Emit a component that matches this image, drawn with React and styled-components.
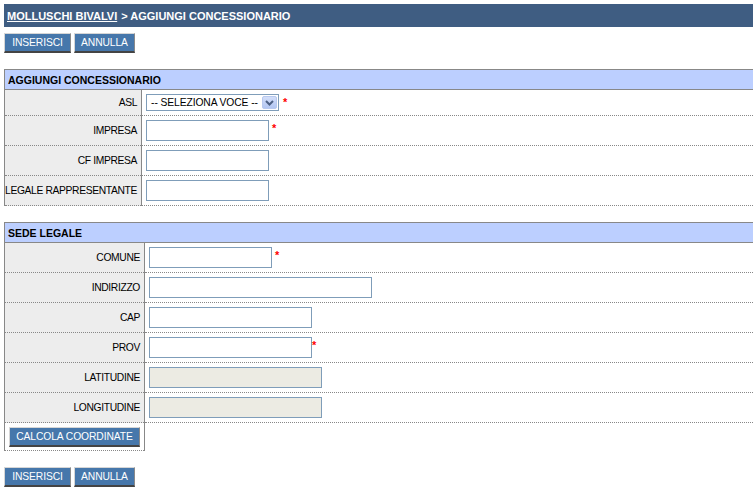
import React from 'react';
import styled, { createGlobalStyle } from 'styled-components';

const GlobalStyle = createGlobalStyle`
  html, body {
    margin: 0;
    padding: 0;
    background: #ffffff;
    overflow: hidden;
  }
  body {
    font-family: "Liberation Sans", Arial, sans-serif;
    font-size: 10px;
    color: #000000;
  }
`;

const Page = styled.div`
  padding: 4px 0 0 4px;
`;

const TitleBar = styled.div`
  display: flex;
  align-items: center;
  height: 23px;
  padding-left: 3px;
  background: #3f5d82;
  color: #ffffff;
  font-weight: bold;
  font-size: 11px;
`;

const Crumb = styled.a`
  color: #ffffff;
  text-decoration: underline;
  margin-right: 4px;
`;

const ButtonBar = styled.div`
  display: flex;
  gap: 3px;
  margin-top: ${(p) => p.$top || 6}px;
`;

const Button = styled.button`
  box-sizing: border-box;
  height: 20px;
  width: ${(p) => (p.$width ? `${p.$width}px` : 'auto')};
  padding: 0 5px;
  background: #4677ab;
  color: #ffffff;
  font-family: "Liberation Sans", Arial, sans-serif;
  font-size: 10.3px;
  letter-spacing: -0.1px;
  border-style: solid;
  border-width: 1px 1px 2px 1px;
  border-color: #d6d6d6 #8a8a8a #444444 #d6d6d6;
  cursor: pointer;
`;

const Table = styled.table`
  width: 100%;
  margin-top: ${(p) => p.$top}px;
  border-collapse: collapse;
  border-left: 1px solid #888888;
`;

const HeadCell = styled.th`
  height: 19px;
  padding: 0 0 0 3px;
  background: #bccfff;
  border-top: 1px solid #888888;
  border-bottom: 1px solid #888888;
  text-align: left;
  font-weight: bold;
  font-size: 10.5px;
`;

const Row = styled.tr`
  height: ${(p) => p.$height || 30}px;
`;

const Label = styled.td`
  box-sizing: border-box;
  width: ${(p) => p.$width}px;
  padding: 0 4px 0 0;
  background: ${(p) => (p.$plain ? '#ffffff' : '#ededed')};
  text-align: ${(p) => (p.$plain ? 'left' : 'right')};
  padding-left: ${(p) => (p.$plain ? '4px' : '0')};
  white-space: nowrap;
  font-size: 10.3px;
  letter-spacing: -0.35px;
  border-right: 1px solid #888888;
  border-bottom: 1px dotted #888888;
`;

const Value = styled.td`
  padding: 0 0 0 4px;
  border-bottom: ${(p) => (p.$bare ? 'none' : '1px dotted #888888')};
  white-space: nowrap;
`;

const Field = styled.div`
  display: inline-flex;
  align-items: flex-start;
  vertical-align: middle;
`;

const Input = styled.input`
  box-sizing: border-box;
  width: ${(p) => p.$width}px;
  height: 21px;
  margin: 0;
  padding: 0 3px;
  border: 1px solid #7f9db9;
  background: ${(p) => (p.disabled ? '#ecebe3' : '#ffffff')};
  font-family: "Liberation Sans", Arial, sans-serif;
  font-size: 10px;
`;

const Required = styled.span`
  margin-left: ${(p) => p.$gap ?? 3}px;
  margin-top: 3px;
  color: #ff0000;
  font-weight: bold;
  font-size: 11px;
  line-height: 10px;
`;

const Select = styled.div`
  box-sizing: border-box;
  display: flex;
  align-items: center;
  justify-content: space-between;
  width: 133px;
  height: 17px;
  padding: 0 1px 0 4px;
  border: 1px solid #7f9db9;
  background: #ffffff;
  font-size: 10.3px;
  letter-spacing: -0.1px;
`;

const Arrow = styled.span`
  display: flex;
  align-items: center;
  justify-content: center;
  width: 15px;
  height: 13px;
  border-radius: 2px;
  background: linear-gradient(#d3def9, #b2c6f2);
  border: 1px solid #b8c9ef;
  box-sizing: border-box;
`;

function Chevron() {
  return (
    <svg width="9" height="6" viewBox="0 0 9 6">
      <path d="M1 1 L4.5 4.5 L8 1" fill="none" stroke="#4d6185" strokeWidth="2" />
    </svg>
  );
}

const ownerRows = [
  { label: 'IMPRESA', width: 123, required: true },
  { label: 'CF IMPRESA', width: 123 },
  { label: 'LEGALE RAPPRESENTANTE', width: 123 },
];

const siteRows = [
  { label: 'COMUNE', width: 123, required: true, gap: 3 },
  { label: 'INDIRIZZO', width: 223 },
  { label: 'CAP', width: 163 },
  { label: 'PROV', width: 163, required: true, gap: 0 },
  { label: 'LATITUDINE', width: 173, disabled: true },
  { label: 'LONGITUDINE', width: 173, disabled: true },
];

function Actions({ top }) {
  return (
    <ButtonBar $top={top}>
      <Button type="submit" $width={67}>INSERISCI</Button>
      <Button type="button" $width={61}>ANNULLA</Button>
    </ButtonBar>
  );
}

export default function App() {
  return (
    <>
      <GlobalStyle />
      <Page>
        <TitleBar>
          <Crumb href="#molluschi">MOLLUSCHI BIVALVI</Crumb>
          {'> AGGIUNGI CONCESSIONARIO'}
        </TitleBar>

        <Actions top={6} />

        <Table $top={16}>
          <thead>
            <tr>
              <HeadCell colSpan={2}>AGGIUNGI CONCESSIONARIO</HeadCell>
            </tr>
          </thead>
          <tbody>
            <Row $height={26}>
              <Label $width={137}>ASL</Label>
              <Value>
                <Field>
                  <Select>
                    <span>-- SELEZIONA VOCE --</span>
                    <Arrow><Chevron /></Arrow>
                  </Select>
                  <Required $gap={4}>*</Required>
                </Field>
              </Value>
            </Row>
            {ownerRows.map((row) => (
              <Row key={row.label}>
                <Label $width={137}>{row.label}</Label>
                <Value>
                  <Field>
                    <Input type="text" $width={row.width} />
                    {row.required && <Required>*</Required>}
                  </Field>
                </Value>
              </Row>
            ))}
          </tbody>
        </Table>

        <Table $top={16}>
          <thead>
            <tr>
              <HeadCell colSpan={2}>SEDE LEGALE</HeadCell>
            </tr>
          </thead>
          <tbody>
            {siteRows.map((row) => (
              <Row key={row.label}>
                <Label $width={140}>{row.label}</Label>
                <Value>
                  <Field>
                    <Input type="text" $width={row.width} disabled={row.disabled} />
                    {row.required && <Required $gap={row.gap}>*</Required>}
                  </Field>
                </Value>
              </Row>
            ))}
            <Row $height={28}>
              <Label $width={140} $plain>
                <Button type="button" $width={131}>CALCOLA COORDINATE</Button>
              </Label>
              <Value $bare />
            </Row>
          </tbody>
        </Table>

        <Actions top={16} />
      </Page>
    </>
  );
}
